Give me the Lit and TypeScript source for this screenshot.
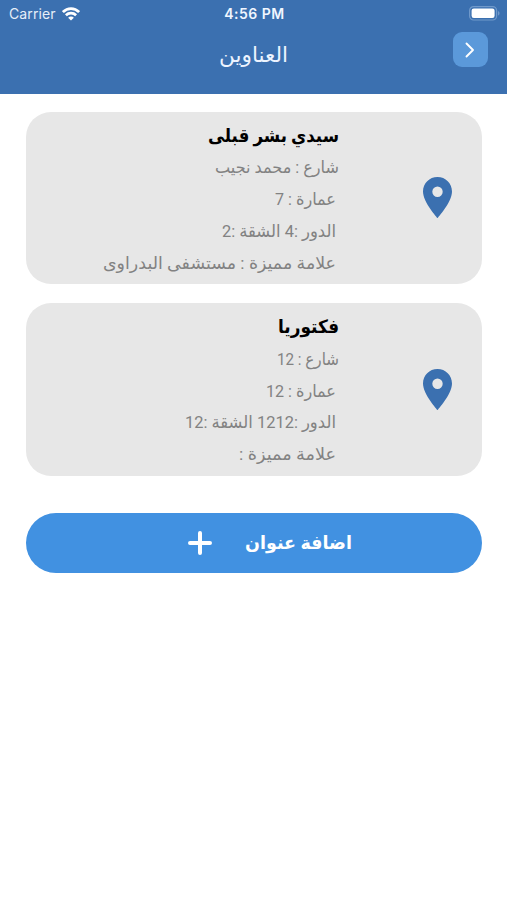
import { LitElement, html, svg, css } from "lit";
import { customElement, property } from "lit/decorators.js";

interface Line {
  text: string;
  width: number;
  inset?: number;
  bold?: boolean;
}

const addresses: Line[][] = [
  [
    { text: "سيدي بشر قبلى", width: 131, bold: true },
    { text: "شارع : محمد نجيب", width: 124 },
    { text: "عمارة : 7", width: 61, inset: 3 },
    { text: "الدور :4 الشقة :2", width: 114, inset: 3 },
    { text: "علامة مميزة : مستشفى البدراوى", width: 233, inset: 3 },
  ],
  [
    { text: "فكتوريا", width: 61, bold: true },
    { text: "شارع : 12", width: 62 },
    { text: "عمارة : 12", width: 70, inset: 3 },
    { text: "الدور :1212 الشقة :12", width: 151, inset: 3 },
    { text: "علامة مميزة :", width: 97, inset: 3 },
  ],
];

/* One line of right-to-left text fitted to a given width. */
@customElement("fit-text")
export class FitText extends LitElement {
  @property() text = "";
  @property({ type: Number }) width = 100;
  @property({ type: Number }) size = 17;
  @property({ type: Boolean }) bold = false;

  static styles = css`
    :host { display: block; line-height: 0; }
    svg { display: block; overflow: visible; }
    text {
      font-family: Roboto, "DejaVu Sans", sans-serif;
      fill: currentColor;
      direction: rtl;
    }
    .bold { font-weight: 700; }
  `;

  render() {
    return html`<svg width=${this.width} height="32" viewBox="0 0 ${this.width} 32">
      ${svg`<text class=${this.bold ? "bold" : ""} x=${this.width} y="22" font-size=${this.size}
        textLength=${this.width} lengthAdjust="spacingAndGlyphs">${this.text}</text>`}
    </svg>`;
  }
}

@customElement("app-root")
export class AppRoot extends LitElement {
  static styles = css`
    :host {
      display: block;
      height: 900px;
      background: #fff;
      font-family: Inter, sans-serif;
      overflow: hidden;
    }
    header { height: 93.5px; background: #3b70b0; color: #fff; box-sizing: border-box; }
    .status {
      display: grid;
      grid-template-columns: 1fr auto 1fr;
      align-items: center;
      height: 27px;
      padding: 0 7px 0 9px;
      font-size: 14px;
    }
    .carrier { display: flex; align-items: center; gap: 6px; color: #e6eef8; letter-spacing: .1px; }
    .time { font-weight: 600; font-size: 14px; letter-spacing: .5px; color: #f0f6ff; }
    .battery { justify-self: end; display: block; }
    .nav { display: grid; grid-template-columns: 1fr auto 1fr; padding: 5px 19.5px 0; }
    .title { grid-column: 2; padding-top: 7.5px; color: #edf4ff; }
    .back {
      justify-self: end;
      width: 35px;
      height: 35px;
      border: 0;
      padding: 0;
      border-radius: 9px;
      background: #5b99da;
      display: grid;
      place-items: center;
    }
    main { padding: 18px 26px 0 26px; display: flex; flex-direction: column; gap: 19px; }
    .card {
      display: flex;
      height: 172.5px;
      border-radius: 25px;
      background: #e7e7e7;
      padding-inline: 0 30px;
      box-sizing: border-box;
      justify-content: flex-end;
      width: 455.5px;
    }
    .lines { display: flex; flex-direction: column; align-items: flex-end; padding-top: 8px; color: #828282; }
    .line { height: 31.8px; }
    .name { color: #000; }
    .pin { align-self: center; margin-left: 83.7px; }
    .add {
      display: flex;
      align-items: center;
      justify-content: flex-start;
      gap: 33px;
      width: 455.5px;
      height: 60.5px;
      margin-top: 18px;
      border: 0;
      border-radius: 31px;
      padding: 0 0 0 162px;
      background: #4191e1;
      color: #fff;
    }
    .add fit-text { padding-top: 1px; }
  `;

  private card(lines: Line[]) {
    return html`<section class="card">
      <div class="lines">
        ${lines.map(
          (l) => html`<div class="line ${l.bold ? "name" : ""}" style="margin-right:${l.inset ?? 0}px">
            <fit-text .text=${l.text} .width=${l.width} .bold=${!!l.bold} .size=${l.bold ? 18.5 : 17}></fit-text>
          </div>`
        )}
      </div>
      <svg class="pin" width="29" height="41" viewBox="0 0 29 41">
        <path fill="#3b70b0" fill-rule="evenodd" d="M14.5 0C6.4 0 0 6.4 0 14.4 0 25.2 14.5 41 14.5 41S29 25.2 29 14.4C29 6.4 22.6 0 14.5 0Zm0 9.6a5.2 5.2 0 1 1 0 10.4 5.2 5.2 0 0 1 0-10.4Z" />
      </svg>
    </section>`;
  }

  render() {
    return html`
      <header>
        <div class="status">
          <div class="carrier">
            <span>Carrier</span>
            <svg width="18" height="14" viewBox="0 0 18 14" fill="none" stroke="#fff" stroke-width="2.7">
              <path d="M.9 5.1C5.5.4 12.5.4 17.1 5.1" />
              <path d="M3.9 8.2c2.9-2.8 7.3-2.8 10.2 0" />
              <path d="M9 13.6 6.1 10.7c1.6-1.5 4.2-1.5 5.8 0Z" fill="#fff" stroke="none" />
            </svg>
          </div>
          <div class="time">4:56 PM</div>
          <svg class="battery" width="31" height="15" viewBox="0 0 31 15">
            <rect x=".6" y=".6" width="27" height="13.4" rx="4" fill="none" stroke="#7099ca" stroke-width="1.2" />
            <rect x="2.6" y="2.6" width="23" height="9.4" rx="2.2" fill="#fff" />
            <path d="M29 5c2 .8 2 3.800 0 4.600Z" fill="#7099ca" />
          </svg>
        </div>
        <div class="nav">
          <fit-text class="title" .text=${"العناوين"} .width=${69} .size=${21}></fit-text>
          <button class="back" aria-label="رجوع">
            <svg width="10" height="16" viewBox="0 0 10 16" fill="none" stroke="#fff" stroke-width="1.9" stroke-linecap="round" stroke-linejoin="round">
              <path d="m1.500 1.500 6.500 6.500-6.500 6.500" />
            </svg>
          </button>
        </div>
      </header>
      <main>
        ${addresses.map((a) => this.card(a))}
        <button class="add">
          <svg width="24" height="24" viewBox="0 0 24 24" stroke="#fff" stroke-width="4" stroke-linecap="round">
            <path d="M12 2v20M2 12h20" />
          </svg>
          <fit-text .text=${"اضافة عنوان"} .width=${107} .size=${18.5} .bold=${true}></fit-text>
        </button>
      </main>
    `;
  }
}
